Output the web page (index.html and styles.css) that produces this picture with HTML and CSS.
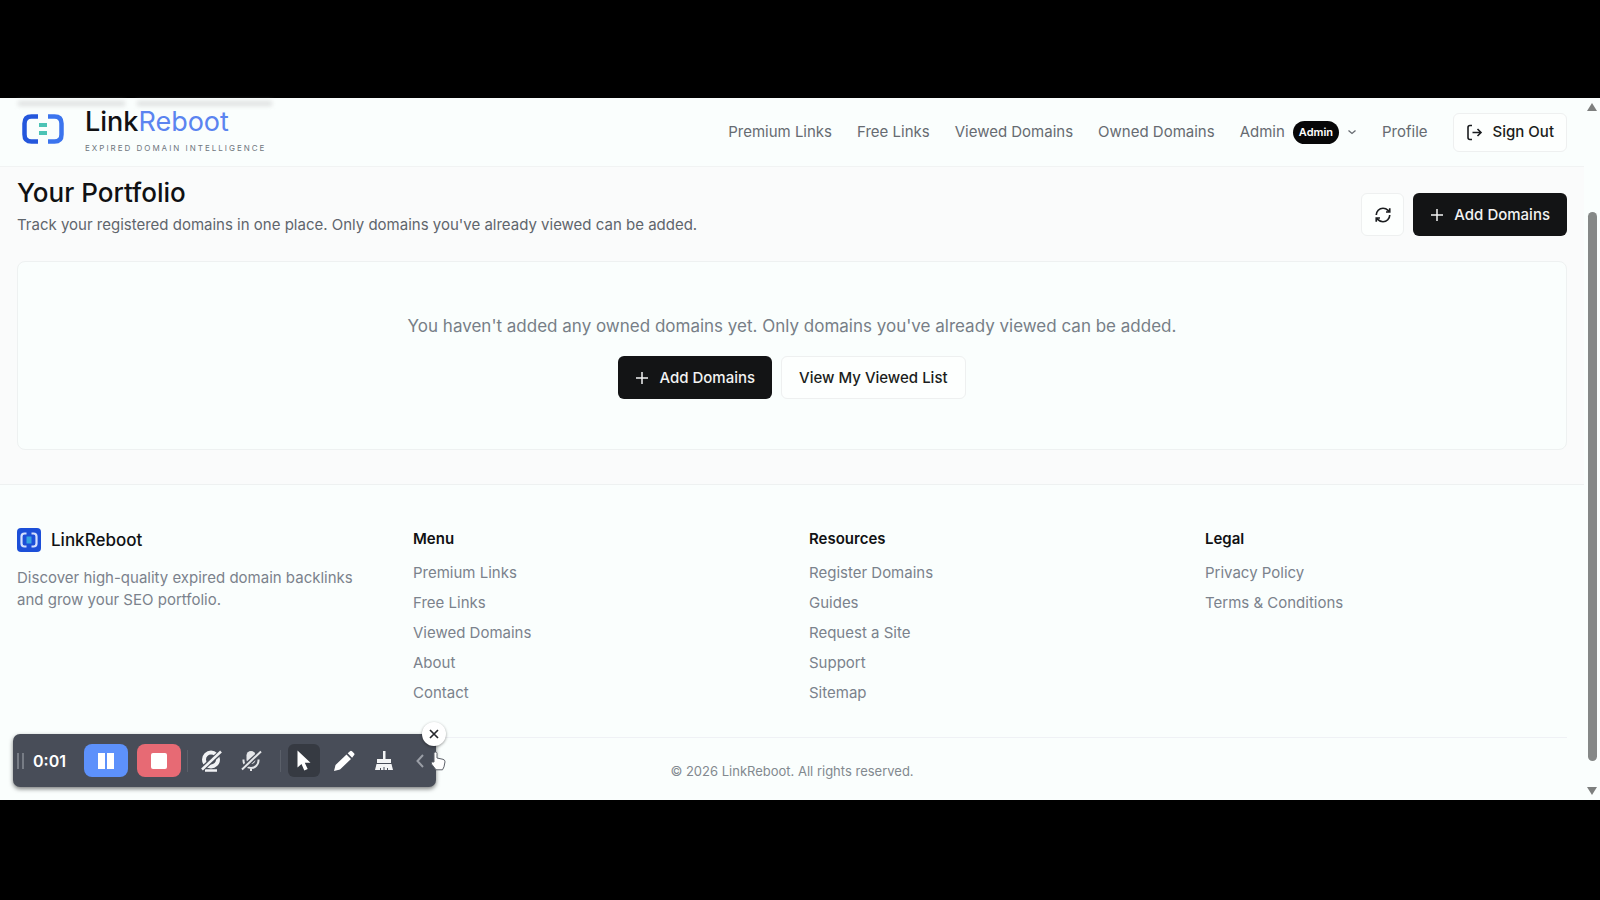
FILE: index.html
```html
<!DOCTYPE html>
<html lang="en">
<head>
<meta charset="utf-8">
<meta name="viewport" content="width=device-width, initial-scale=1">
<title>Your Portfolio - LinkReboot</title>
<link rel="stylesheet" href="styles.css">
</head>
<body>
<div class="viewport">
  <div class="page">
    <header class="header">
      <div class="scrolled-text" aria-hidden="true"></div>
      <a class="brand" href="#" aria-label="LinkReboot home">
        <svg class="brand-mark" viewBox="0 0 42 30" fill="none" stroke-width="4.500">
          <path d="M16 2.500H9.500Q2.500 2.500 2.500 9.500v11q0 7 7 7H16" stroke="#2457dc"/>
          <path d="M26 2.500h6.500q7 0 7 7v11q0 7-7 7H26" stroke="#3b74ee"/>
          <path d="M17 11h8M17 19h8" stroke="#4cc3b5" stroke-width="4"/>
        </svg>
        <span class="brand-text">
          <span class="wordmark">Link<span class="wordmark-accent">Reboot</span></span>
          <span class="tagline">EXPIRED DOMAIN INTELLIGENCE</span>
        </span>
      </a>
      <nav class="nav" aria-label="Main">
        <a href="#">Premium Links</a>
        <a href="#">Free Links</a>
        <a href="#">Viewed Domains</a>
        <a href="#">Owned Domains</a>
        <button class="nav-menu" type="button">Admin <span class="badge">Admin</span>
          <svg width="10" height="10" viewBox="0 0 10 10" fill="none" stroke="currentColor" stroke-width="1.300"><path d="M1.500 3.500 5 6.500l3.500-3"/></svg>
        </button>
        <a href="#">Profile</a>
        <button class="btn btn-outline btn-small" type="button">
          <svg width="17" height="17" viewBox="0 0 17 17" fill="none" stroke="currentColor" stroke-width="1.600"><path d="M6 1.500H4Q2 1.500 2 3.500v10q0 2 2 2h2M6.500 8.500H15M11.500 5l3.500 3.500-3.500 3.500"/></svg>
          Sign Out
        </button>
      </nav>
    </header>

    <main class="main">
      <div class="title-row">
        <div>
          <h1>Your Portfolio</h1>
          <p class="subtitle">Track your registered domains in one place. Only domains you've already viewed can be added.</p>
        </div>
        <div class="actions">
          <button class="btn btn-outline btn-icon" type="button" aria-label="Refresh">
            <svg width="18" height="18" viewBox="0 0 24 24" fill="none" stroke="currentColor" stroke-width="2.200"><path d="M3 12a9 9 0 0 1 9-9 9.750 9.750 0 0 1 6.740 2.740L21 8M21 3v5h-5M21 12a9 9 0 0 1-9 9 9.750 9.750 0 0 1-6.740-2.740L3 16M8 16H3v5"/></svg>
          </button>
          <button class="btn btn-dark" type="button">
            <svg width="14" height="14" viewBox="0 0 14 14" stroke="currentColor" stroke-width="1.500"><path d="M7 1v12M1 7h12"/></svg>
            Add Domains
          </button>
        </div>
      </div>
      <section class="card">
        <p class="empty-text">You haven't added any owned domains yet. Only domains you've already viewed can be added.</p>
        <div class="actions">
          <button class="btn btn-dark" type="button">
            <svg width="14" height="14" viewBox="0 0 14 14" stroke="currentColor" stroke-width="1.500"><path d="M7 1v12M1 7h12"/></svg>
            Add Domains
          </button>
          <button class="btn btn-outline" type="button">View My Viewed List</button>
        </div>
      </section>
    </main>

    <footer class="footer">
      <div class="footer-grid">
        <div>
          <div class="footer-brand">
            <svg width="24" height="24" viewBox="0 0 24 24" fill="none"><rect width="24" height="24" rx="4" fill="#1c4fd8"/><path d="M9.500 5.500H7.500q-3 0-3 3v7q0 3 3 3h2M14.500 5.500h2q3 0 3 3v7q0 3-3 3h-2" stroke="#d3e0fd" stroke-width="2.200"/><path d="M9.500 8.500h5v7h-5z" fill="#35a5e0"/></svg>
            LinkReboot
          </div>
          <p class="footer-about">Discover high-quality expired domain backlinks and grow your SEO portfolio.</p>
        </div>
        <nav aria-labelledby="f-menu">
          <h2 id="f-menu">Menu</h2>
          <ul>
            <li><a href="#">Premium Links</a></li>
            <li><a href="#">Free Links</a></li>
            <li><a href="#">Viewed Domains</a></li>
            <li><a href="#">About</a></li>
            <li><a href="#">Contact</a></li>
          </ul>
        </nav>
        <nav aria-labelledby="f-res">
          <h2 id="f-res">Resources</h2>
          <ul>
            <li><a href="#">Register Domains</a></li>
            <li><a href="#">Guides</a></li>
            <li><a href="#">Request a Site</a></li>
            <li><a href="#">Support</a></li>
            <li><a href="#">Sitemap</a></li>
          </ul>
        </nav>
        <nav aria-labelledby="f-legal">
          <h2 id="f-legal">Legal</h2>
          <ul>
            <li><a href="#">Privacy Policy</a></li>
            <li><a href="#">Terms &amp; Conditions</a></li>
          </ul>
        </nav>
      </div>
      <p class="copyright">© 2026 LinkReboot. All rights reserved.</p>
    </footer>
  </div>

  <div class="scrollbar" aria-hidden="true">
    <svg width="10" height="8" viewBox="0 0 10 8" fill="#7d7f7e"><path d="M5 0l5 8H0z"/></svg>
    <div class="track"><div class="thumb"></div></div>
    <svg width="10" height="8" viewBox="0 0 10 8" fill="#7d7f7e"><path d="M0 0h10L5 8z"/></svg>
  </div>

  <div class="recorder" role="toolbar" aria-label="Screen recorder">
    <span class="grip"></span>
    <span class="timer">0:01</span>
    <button class="rec-btn rec-pause" type="button" aria-label="Pause"><svg width="18" height="16" viewBox="0 0 18 16" fill="#fff"><path d="M1 0h7v16H1zM10 0h7v16h-7z"/></svg></button>
    <button class="rec-btn rec-stop" type="button" aria-label="Stop"><svg width="16" height="16" viewBox="0 0 16 16" fill="#fff"><rect width="16" height="16" rx="2"/></svg></button>
    <span class="sep"></span>
    <button class="rec-tool" type="button" aria-label="Camera off"><svg width="24" height="24" viewBox="0 0 24 24" fill="none" stroke="#f1f2f4"><circle cx="12" cy="10.500" r="7" stroke-width="4"/><path d="M6 21.500h12" stroke-width="2.500"/><path d="M2 21 22 3" stroke="#484d58" stroke-width="5"/><path d="M3 20.500 22 2.500" stroke-width="2.500"/></svg></button>
    <button class="rec-tool" type="button" aria-label="Microphone off"><svg width="24" height="24" viewBox="0 0 24 24" fill="none" stroke="#e4e6e9"><rect x="7.500" y="2" width="9" height="13" rx="4.500" fill="#e4e6e9" stroke="none"/><path d="M4.500 10.500v1a7.500 7.500 0 0 0 15 0v-1M12 18v4" stroke-width="2"/><path d="M2 21 22 3" stroke="#484d58" stroke-width="5"/><path d="M3 20.500 22 2.500" stroke-width="2"/></svg></button>
    <span class="sep"></span>
    <button class="rec-tool rec-active" type="button" aria-label="Cursor"><svg width="24" height="24" viewBox="0 0 24 24" fill="#fff"><path d="M5.500 1.500v17l4-3.500 2.800 6.500 3.400-1.500-2.900-6.200h5.700z"/></svg></button>
    <button class="rec-tool" type="button" aria-label="Pen"><svg width="24" height="24" viewBox="0 0 24 24" fill="#fff"><path d="m2 22 1.500-6L14.500 5.500l4.500 4.500L8 20.500zM15.700 4.300 18 2.200q1-.9 2 .1l2 2q1 1 0 2l-1.900 2.500z"/></svg></button>
    <button class="rec-tool" type="button" aria-label="Clear"><svg width="24" height="24" viewBox="0 0 24 24" fill="#f4f5f6"><path d="M11 2h2.500v8H11zM5 10h14v4H5zM4.500 15h15l1.500 6H3z"/><path d="M8.500 22v-3M12 22v-4M15.500 22v-3" stroke="#484d58"/></svg></button>
    <button class="rec-collapse" type="button" aria-label="Collapse"><svg width="8" height="14" viewBox="0 0 8 14" fill="none" stroke="#9a9ea6" stroke-width="2"><path d="M7 1 1.500 7 7 13"/></svg></button>
    <button class="rec-close" type="button" aria-label="Close"><svg width="10" height="10" viewBox="0 0 10 10" stroke="#26282c" stroke-width="1.700"><path d="m1 1 8 8M9 1 1 9"/></svg></button>
    <svg class="hand" viewBox="0 0 16 20" fill="#fff" stroke="#5c6068"><path d="M4 11V2.500a1.500 1.500 0 0 1 3 0V7l6 1.300q2 .5 2 2.500l-1 5-1.500 3H6L1.500 13q-.5-2 1-2z"/></svg>
  </div>
</div>
</body>
</html>
```

FILE: styles.css
```css
* { box-sizing: border-box; }
body {
  margin: 0;
  min-height: 100vh;
  padding: 98px 0 100px;
  background: #000;
  color: #101113;
  font: 15px/22px Inter, "Liberation Sans", sans-serif;
}
h1, h2, p, ul { margin: 0; padding: 0; }
ul { list-style: none; }
a { color: inherit; text-decoration: none; }
button { font: inherit; color: inherit; border: 0; background: none; padding: 0; }
svg { flex: none; display: block; }

.viewport {
  position: relative;
  display: grid;
  grid-template-columns: 1fr 16px;
  background: #fafefd;
  min-height: calc(100vh - 198px);
}
.page { display: flex; flex-direction: column; }

.header {
  position: relative;
  display: flex;
  align-items: center;
  justify-content: space-between;
  height: 69px;
  padding: 0 17px;
  border-bottom: 1px solid #f1f3f3;
}
.scrolled-text {
  position: absolute;
  left: 18px;
  top: 3px;
  width: 254px;
  height: 5px;
  background: linear-gradient(90deg, #dfe1e1 42%, transparent 42% 47%, #dfe1e1 47%);
  filter: blur(2px);
}
.brand { position: relative; display: flex; align-items: center; gap: 21px; padding-left: 5px; }
.brand-mark { width: 42px; height: 30px; margin-bottom: 6px; }
.brand-text { display: flex; flex-direction: column; gap: 6px; padding-bottom: 3px; }
.wordmark { font-size: 27px; line-height: 28px; font-weight: 500; }
.wordmark-accent { color: #5b84f0; font-weight: 400; }
.tagline { font-size: 8px; line-height: 12px; letter-spacing: 2px; color: #6f767e; }

.nav { display: flex; align-items: center; gap: 25px; color: #666b71; }
.nav-menu { display: flex; align-items: center; gap: 8px; }
.badge {
  padding: 0 6px;
  border-radius: 12px;
  background: #070708;
  color: #fff;
  font-size: 11px;
  line-height: 23px;
  font-weight: 600;
}

.btn {
  display: inline-flex;
  align-items: center;
  justify-content: center;
  gap: 10px;
  height: 43px;
  padding: 0 17px;
  border-radius: 6px;
  font-weight: 500;
  white-space: nowrap;
}
.btn-dark { background: #131415; color: #f2f2f2; }
.btn-outline { border: 1px solid #eef0f0; background: #fdfffe; color: #1b1d20; }
.btn-small { height: 39px; padding: 0 12px; }
.btn-icon { width: 43px; padding: 0; }
.actions { display: flex; gap: 9px; }

.main {
  padding: 12px 17px 34px;
  background: #fafbfb;
}
.title-row { display: flex; align-items: center; justify-content: space-between; margin-bottom: 25px; }
h1 { font-size: 26px; line-height: 28px; font-weight: 500; }
.subtitle { margin-top: 7px; color: #5f656c; }
.title-row .actions { padding-top: 14px; }
.card {
  display: flex;
  flex-direction: column;
  align-items: center;
  gap: 17px;
  padding: 51px 17px 50px;
  border: 1px solid #eef1f1;
  border-radius: 8px;
  background: #fafefd;
}
.empty-text { font-size: 17px; line-height: 26px; color: #777e87; }

.footer { padding: 42px 17px 16px; border-top: 1px solid #eef1f1; }
.footer-grid { display: grid; grid-template-columns: repeat(4, 1fr); gap: 34px; }
.footer-brand { display: flex; align-items: center; gap: 10px; font-size: 17px; line-height: 26px; font-weight: 500; }
.footer-about { margin-top: 14px; color: #7b828c; }
.footer h2 { font-size: 15px; line-height: 24px; font-weight: 600; margin-bottom: 11px; }
.footer li { line-height: 22px; margin-bottom: 8px; color: #7b828c; }
.copyright {
  margin-top: 25px;
  padding-top: 22px;
  border-top: 1px solid #eff1f5;
  text-align: center;
  font-size: 13px;
  color: #82898f;
}

.scrollbar { display: flex; flex-direction: column; align-items: center; padding: 5px 0 5px; }
.track { flex: 1; width: 9px; padding: 101px 0 26px; }
.thumb { height: 100%; border-radius: 5px; background: #858887; }

.recorder {
  position: absolute;
  left: 13px;
  bottom: 13px;
  display: flex;
  align-items: center;
  width: 423px;
  height: 53px;
  padding-left: 4px;
  border-radius: 7px;
  background: #484d58;
  box-shadow: 0 2px 4px rgba(0, 0, 0, .5);
}
.grip { width: 7px; height: 16px; border: 2px solid #777c85; border-width: 0 2px; }
.timer { width: 53px; padding-left: 9px; color: #fff; font-size: 16px; font-weight: 600; }
.rec-btn { display: grid; place-items: center; width: 44px; height: 33px; border-radius: 8px; }
.rec-pause { margin-left: 7px; background: #5d91fb; }
.rec-stop { margin-left: 9px; background: #e76a74; }
.sep { width: 1px; height: 22px; margin: 0 7px 0 5px; background: #5a5f69; }
.rec-stop + .sep { margin-left: 6px; }
.rec-tool { display: grid; place-items: center; width: 32px; height: 33px; border-radius: 6px; margin-right: 8px; }
.rec-tool:has(+ .rec-tool:not(.rec-active)) { margin-right: 8px; }
.rec-active { background: #363a42; }
.rec-collapse { margin-left: 8px; }
.rec-close {
  position: absolute;
  right: -10px;
  top: -12px;
  display: grid;
  place-items: center;
  width: 24px;
  height: 24px;
  border-radius: 50%;
  background: #fff;
  box-shadow: 0 1px 3px rgba(0, 0, 0, .4);
}
.hand { position: absolute; right: -10px; top: 17px; width: 16px; height: 20px; }
```
